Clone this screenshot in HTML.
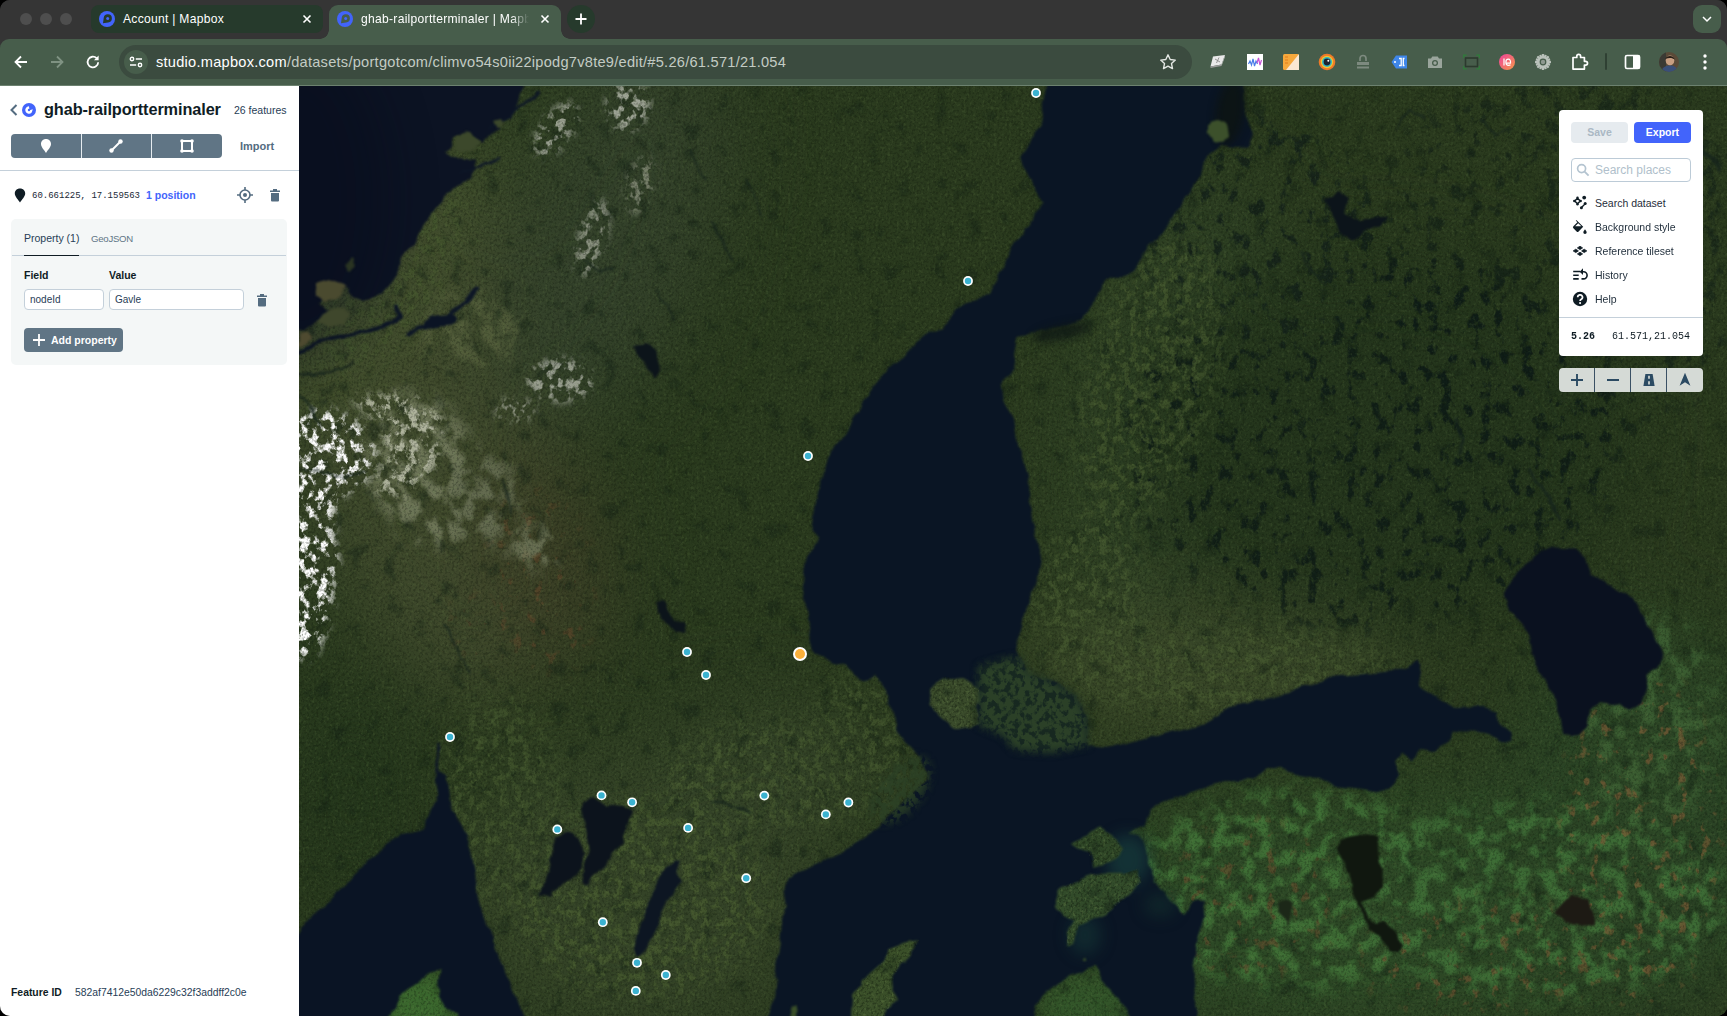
<!DOCTYPE html>
<html>
<head>
<meta charset="utf-8">
<title>ghab-railportterminaler | Mapbox</title>
<style>
*{box-sizing:border-box;margin:0;padding:0}
html,body{width:1727px;height:1016px;overflow:hidden;background:#000;font-family:"Liberation Sans",sans-serif;}
#win{position:absolute;left:0;top:0;width:1727px;height:1016px;overflow:hidden;background:#353535;border-radius:10px;}
.abs{position:absolute}
/* ---------- tab strip ---------- */
#tabstrip{position:absolute;left:0;top:0;width:1727px;height:39px;background:#353535;}
.tl{position:absolute;top:13px;width:12px;height:12px;border-radius:50%;background:#4e4e4e}
#tab1{position:absolute;left:91px;top:5px;width:232px;height:28px;border-radius:8px;background:#263a2c}
#tab2{position:absolute;left:329px;top:5px;width:232px;height:34px;border-radius:9px 9px 0 0;background:#475d4b}
#tab2:before,#tab2:after{content:"";position:absolute;bottom:0;width:9px;height:9px;background:radial-gradient(circle at 0 0,rgba(0,0,0,0) 8.5px,#475d4b 9px)}
#tab2:before{left:-9px}
#tab2:after{right:-9px;background:radial-gradient(circle at 100% 0,rgba(0,0,0,0) 8.5px,#475d4b 9px)}
.tabtxt{position:absolute;top:7px;font-size:12.1px;color:#fff;white-space:nowrap;letter-spacing:0.28px}
.tabx{position:absolute;top:8px;width:12px;height:12px}
#newtab{position:absolute;left:567px;top:5px;width:28px;height:28px;border-radius:50%;background:#263a2c}
#tabsearch{position:absolute;left:1693px;top:5px;width:28px;height:28px;border-radius:9px;background:#475d4b}
/* ---------- toolbar ---------- */
#toolbar{position:absolute;left:0;top:39px;width:1727px;height:47px;background:#475d4b;border-bottom:1px solid #6c816f;border-radius:9px 9px 0 0}
#omni{position:absolute;left:119px;top:6px;width:1073px;height:34px;border-radius:17px;background:#3b4b3f}
#site{position:absolute;left:5px;top:5px;width:24px;height:24px;border-radius:50%;background:#475d4b}
#url{position:absolute;left:37px;top:9px;font-size:14.6px;color:#c3cbc4;white-space:nowrap;letter-spacing:0.255px}
#url b{font-weight:normal;color:#fff}
/* ---------- left panel ---------- */
#panel{position:absolute;left:0;top:86px;width:299px;height:930px;background:#fff;color:#273d56}
#title{position:absolute;left:44px;top:14px;font-size:16.3px;font-weight:bold;color:#0f1c24;white-space:nowrap;letter-spacing:-0.1px}
#feat{position:absolute;left:234px;top:18px;font-size:10.5px;color:#273d56;white-space:nowrap}
#tools{position:absolute;left:11px;top:48px;width:211px;height:24px;border-radius:4px;background:#607585;}
#tools i{position:absolute;top:0;width:1px;height:24px;background:#e6ecf0}
#import{position:absolute;left:240px;top:54px;font-size:11px;font-weight:bold;color:#546c80}
#hr1{position:absolute;left:0;top:84px;width:299px;height:1px;background:#c4d0da}
#coords{position:absolute;left:32px;top:105px;font-family:"Liberation Mono",monospace;font-size:9px;color:#1a2836;white-space:nowrap}
#pos{position:absolute;left:146px;top:103px;font-size:10.5px;font-weight:bold;color:#4264fb;white-space:nowrap}
#card{position:absolute;left:11px;top:133px;width:276px;height:146px;border-radius:5px;background:#f4f7f7}
#card .tab{position:absolute;top:13px;font-size:10.5px;white-space:nowrap}
#card .line{position:absolute;left:1px;top:36px;width:274px;height:1px;background:#c4d0da}
#card .act{position:absolute;left:13px;top:36px;width:55px;height:1px;background:#0f1c24}
#card .lbl{position:absolute;top:50px;font-size:10.5px;font-weight:bold;color:#0f1c24}
#card .inp{position:absolute;top:70px;height:21px;border:1px solid #c4d0da;border-radius:4px;background:#fff;font-size:10px;color:#273d56;padding:4px 0 0 5px}
#addp{position:absolute;left:13px;top:109px;width:99px;height:24px;border-radius:4px;background:#607585;color:#fff;font-size:10.5px;font-weight:bold}
#addp span{position:absolute;left:27px;top:6px;white-space:nowrap}
#fid{position:absolute;left:11px;top:901px;font-size:10.4px;font-weight:bold;color:#0f1c24;white-space:nowrap}
#fidv{position:absolute;left:75px;top:901px;font-size:10.37px;color:#273d56;white-space:nowrap}
/* ---------- map ---------- */
#map{position:absolute;left:299px;top:86px;width:1428px;height:930px;overflow:hidden;background:#2a3b1e}
/* ---------- right control ---------- */
#ctl{position:absolute;left:1559px;top:110px;width:144px;height:246px;border-radius:4px;background:#fff;color:#273d56}
#ctl .btn{position:absolute;top:12px;width:57px;height:21px;border-radius:4px;font-size:10.5px;font-weight:bold;text-align:center;line-height:21px}
#ctl .item{position:absolute;left:36px;font-size:10.5px;color:#1f2d3a;white-space:nowrap}
#zoomctl{position:absolute;left:1559px;top:368px;width:144px;height:24px;border-radius:4px;background:#d5dad6;overflow:hidden}
#zoomctl i{position:absolute;top:0;width:1px;height:24px;background:#3a5064}
</style>
</head>
<body>
<div id="win">
<!-- TABSTRIP -->
<div id="tabstrip">
  <div class="tl" style="left:20px"></div><div class="tl" style="left:40px"></div><div class="tl" style="left:60px"></div>
  <div id="tab1">
    <svg class="abs" style="left:8px;top:6px" width="16" height="16" viewBox="0 0 16 16"><circle cx="8" cy="8" r="8" fill="#4264fb"/><path d="M4 12.300l.7-5.300a4.100 4.100 0 1 1 4.400 4.500z" fill="#263a2c"/><circle cx="8.700" cy="7.400" r="1.500" fill="#4264fb"/></svg>
    <div class="tabtxt" style="left:32px">Account | Mapbox</div>
    <svg class="tabx" style="left:210px" viewBox="0 0 12 12"><path d="M2.5 2.5l7 7M9.5 2.5l-7 7" stroke="#fff" stroke-width="1.6"/></svg>
  </div>
  <div id="tab2">
    <svg class="abs" style="left:8px;top:6px" width="16" height="16" viewBox="0 0 16 16"><circle cx="8" cy="8" r="8" fill="#4264fb"/><path d="M4 12.300l.7-5.300a4.100 4.100 0 1 1 4.400 4.500z" fill="#475d4b"/><circle cx="8.700" cy="7.400" r="1.500" fill="#4264fb"/></svg>
    <div class="tabtxt" style="left:32px;width:168px;overflow:hidden;-webkit-mask-image:linear-gradient(90deg,#000 150px,transparent 168px)">ghab-railportterminaler | Mapbox</div>
    <svg class="tabx" style="left:210px" viewBox="0 0 12 12"><path d="M2.5 2.5l7 7M9.5 2.5l-7 7" stroke="#fff" stroke-width="1.6"/></svg>
  </div>
  <div id="newtab"><svg class="abs" style="left:7px;top:7px" width="14" height="14" viewBox="0 0 14 14"><path d="M7 1.5v11M1.5 7h11" stroke="#fff" stroke-width="1.8"/></svg></div>
  <div id="tabsearch"><svg class="abs" style="left:8px;top:9px" width="12" height="10" viewBox="0 0 12 10"><path d="M2 3l4 4 4-4" fill="none" stroke="#fff" stroke-width="1.5"/></svg></div>
</div>
<!-- TOOLBAR -->
<div id="toolbar">
  <svg class="abs" style="left:13px;top:15px" width="16" height="16" viewBox="0 0 16 16"><path d="M14 8H3M8 2.5L2.5 8 8 13.5" fill="none" stroke="#fff" stroke-width="1.8"/></svg>
  <svg class="abs" style="left:49px;top:15px" width="16" height="16" viewBox="0 0 16 16"><path d="M2 8h11M8 2.5L13.5 8 8 13.5" fill="none" stroke="#7f9282" stroke-width="1.8"/></svg>
  <svg class="abs" style="left:85px;top:15px" width="16" height="16" viewBox="0 0 16 16"><path d="M13.2 8.2A5.3 5.3 0 1 1 11.6 4.2" fill="none" stroke="#fff" stroke-width="1.8"/><path d="M13.6 1.6v4.6H9z" fill="#fff"/></svg>
  <div id="omni">
    <div id="site"><svg class="abs" style="left:5px;top:6px" width="14" height="12" viewBox="0 0 14 12"><path d="M6.800 3H13M1 9h6.200" stroke="#fff" stroke-width="1.600"/><circle cx="3" cy="3" r="1.700" fill="none" stroke="#fff" stroke-width="1.400"/><circle cx="11" cy="9" r="1.700" fill="none" stroke="#fff" stroke-width="1.400"/></svg></div>
    <div id="url"><b>studio.mapbox.com</b>/datasets/portgotcom/climvo54s0ii22ipodg7v8te9/edit/#5.26/61.571/21.054</div>
    <svg class="abs" style="left:1040px;top:8px" width="18" height="18" viewBox="0 0 18 18"><path d="M9 1.8l2.2 4.7 5.1.6-3.8 3.5 1 5L9 13.1l-4.500 2.500 1-5-3.800-3.500 5.100-.6z" fill="none" stroke="#e4e8e4" stroke-width="1.4" stroke-linejoin="round"/></svg>
  </div>
  <div id="exts">
  <!-- ext1: white 3d tile -->
  <svg class="abs" style="left:1209px;top:14px" width="18" height="18" viewBox="0 0 18 18"><path d="M4 3.500l12-1.500-3.500 9.500-11 2z" fill="#e9e9e9"/><path d="M1.500 13.500l11-2v1.600l-11 2z" fill="#9a9a9a"/><path d="M12.500 11.500L16 2v1.800l-3.500 9.300z" fill="#c4c4c4"/><path d="M6 6l5 3M10 4.500L7.500 10" stroke="#8a8a8a" stroke-width=".9"/></svg>
  <!-- ext2: white square w/ waveform -->
  <svg class="abs" style="left:1247px;top:15px" width="16" height="16" viewBox="0 0 16 16"><rect width="16" height="16" fill="#fff"/><path d="M1.500 10l1.500-3 1.500 4 1.500-6 1.500 7 1.500-5 1.500 3" fill="none" stroke="#4a7de8" stroke-width="1.200"/><path d="M10 9l1.500-5 1.500 7 1.500-5" fill="none" stroke="#c653d6" stroke-width="1.200"/></svg>
  <!-- ext3: orange/white notebook -->
  <svg class="abs" style="left:1283px;top:15px" width="16" height="16" viewBox="0 0 16 16"><rect width="16" height="16" rx="1.500" fill="#f6a83c"/><path d="M16 0v16H3z" fill="#fbe7d2"/><path d="M2 3h3M2 6h3M2 9h3" stroke="#e27a1a" stroke-width="1"/></svg>
  <!-- ext4: colourful eye -->
  <svg class="abs" style="left:1318px;top:14px" width="18" height="18" viewBox="0 0 18 18"><circle cx="9" cy="9" r="8.300" fill="#f07a28"/><circle cx="9" cy="9" r="6.200" fill="#f2c530"/><circle cx="9" cy="9" r="5" fill="#31b6c4"/><circle cx="9" cy="9" r="3.400" fill="#1d2430"/><circle cx="10.300" cy="7.800" r="1" fill="#fff"/></svg>
  <!-- ext5: gray stamp -->
  <svg class="abs" style="left:1355px;top:15px" width="16" height="16" viewBox="0 0 16 16"><path d="M5 7V4.500a3 3 0 0 1 6 0V7" fill="none" stroke="#7d8a7f" stroke-width="1.700"/><rect x="2" y="8" width="12" height="3" fill="#7d8a7f"/><rect x="2" y="12.500" width="12" height="2" fill="#7d8a7f"/></svg>
  <!-- ext6: blue tag -->
  <svg class="abs" style="left:1391px;top:16px" width="17" height="14" viewBox="0 0 17 14"><path d="M5 .5h11v13H5L.5 7z" fill="#3f86e8"/><circle cx="4" cy="7" r="1" fill="#fff"/><path d="M8 3.500h2.200v7H8M13.500 3.500h-1.200v7h1.200" fill="none" stroke="#fff" stroke-width="1.300"/></svg>
  <!-- ext7: gray camera -->
  <svg class="abs" style="left:1427px;top:16px" width="16" height="14" viewBox="0 0 16 14"><path d="M1 3.500h3l1.300-2h5.400l1.300 2h3V13H1z" fill="#9aa59c"/><circle cx="8" cy="8" r="3" fill="#475d4b"/><circle cx="8" cy="8" r="1.700" fill="#9aa59c"/></svg>
  <!-- ext8: dark rect w/ green corners -->
  <svg class="abs" style="left:1463px;top:15px" width="17" height="16" viewBox="0 0 17 16"><rect x="2.500" y="4" width="12" height="8.500" fill="none" stroke="#2c3a2e" stroke-width="1.600"/><path d="M.7 4V1.200h3M13.300 1.200h3V4M.7 12v2.800h3M13.300 14.800h3V12" fill="none" stroke="#2f7d3a" stroke-width="1.200"/></svg>
  <!-- ext9: pink-orange circle -->
  <svg class="abs" style="left:1499px;top:15px" width="16" height="16" viewBox="0 0 16 16"><defs><linearGradient id="gp" x1="0" y1="0" x2="1" y2="1"><stop offset="0" stop-color="#f0409a"/><stop offset="1" stop-color="#f59a4a"/></linearGradient></defs><circle cx="8" cy="8" r="8" fill="url(#gp)"/><path d="M5 4.500v7M7.500 9.200h4c.3-2.500-.6-4-2.200-4-1.500 0-2.400 1.300-2.400 3 0 1.900 1 3.200 2.700 3.200.8 0 1.400-.2 1.900-.600" fill="none" stroke="#fff" stroke-width="1.200"/></svg>
  <!-- ext10: gear -->
  <svg class="abs" style="left:1535px;top:15px" width="16" height="16" viewBox="0 0 16 16"><g fill="#b9c1ba"><circle cx="8" cy="8" r="5.600"/><g><rect x="6.800" y="0" width="2.400" height="16" rx=".6"/><rect x="6.800" y="0" width="2.400" height="16" rx=".6" transform="rotate(45 8 8)"/><rect x="6.800" y="0" width="2.400" height="16" rx=".6" transform="rotate(90 8 8)"/><rect x="6.800" y="0" width="2.400" height="16" rx=".6" transform="rotate(135 8 8)"/><rect x="6.800" y=".400" width="2.400" height="15.200" rx=".6" transform="rotate(22.500 8 8)"/><rect x="6.800" y=".400" width="2.400" height="15.200" rx=".6" transform="rotate(67.500 8 8)"/><rect x="6.800" y=".400" width="2.400" height="15.200" rx=".6" transform="rotate(112.500 8 8)"/><rect x="6.800" y=".400" width="2.400" height="15.200" rx=".6" transform="rotate(157.500 8 8)"/></g></g><circle cx="8" cy="8" r="3.400" fill="#475d4b"/><circle cx="8" cy="8" r="2.200" fill="#8d988f"/></svg>
  <!-- puzzle -->
  <svg class="abs" style="left:1570px;top:13px" width="19" height="19" viewBox="0 0 19 19"><path d="M3 5.500h3.800V4.300a1.900 1.900 0 0 1 3.800 0v1.200h3.800v3.800h1.200a1.900 1.900 0 0 1 0 3.800h-1.200v4H3z" fill="none" stroke="#fff" stroke-width="1.700" stroke-linejoin="round"/></svg>
  <div class="abs" style="left:1605px;top:14px;width:2px;height:17px;background:#2f4033;border-radius:1px"></div>
  <!-- side panel -->
  <svg class="abs" style="left:1624px;top:15px" width="17" height="16" viewBox="0 0 17 16"><rect x="1.500" y="1.500" width="14" height="13" rx="1.500" fill="none" stroke="#fff" stroke-width="1.700"/><rect x="9" y="1.500" width="6.500" height="13" fill="#fff"/></svg>
  <!-- avatar -->
  <svg class="abs" style="left:1659px;top:13px" width="20" height="20" viewBox="0 0 20 20"><defs><clipPath id="av"><circle cx="10" cy="10" r="10"/></clipPath></defs><g clip-path="url(#av)"><rect width="20" height="20" fill="#5a4a38"/><rect x="0" y="0" width="7" height="20" fill="#3b3a34"/><ellipse cx="11" cy="8.500" rx="4.300" ry="5" fill="#c99f82"/><path d="M6.500 7c0-4 9-4.500 9 .5-1.500-1.800-6-2.200-9-.5z" fill="#2a2019"/><path d="M2 20c1-5 5-6.500 9-6.500s7 1.500 8 6.500z" fill="#3a4f78"/></g></svg>
  <!-- 3 dots -->
  <svg class="abs" style="left:1703px;top:14px" width="4" height="18" viewBox="0 0 4 18"><circle cx="2" cy="3" r="1.700" fill="#fff"/><circle cx="2" cy="9" r="1.700" fill="#fff"/><circle cx="2" cy="15" r="1.700" fill="#fff"/></svg>
</div>
</div>
<!-- LEFT PANEL -->
<div id="panel">
  <svg class="abs" style="left:10px;top:18px" width="8" height="12" viewBox="0 0 8 12"><path d="M6.5 1L1.500 6l5 5" fill="none" stroke="#546c80" stroke-width="2"/></svg>
  <svg class="abs" style="left:22px;top:17px" width="14" height="14" viewBox="0 0 14 14"><circle cx="7" cy="7" r="7" fill="#4264fb"/><path d="M7 3.300a3.700 3.700 0 1 0 2.700 6.200l1.100-3.300-3.300 1.100z" fill="#fff"/><circle cx="7" cy="7" r="1.200" fill="#4264fb"/></svg>
  <div id="title">ghab-railportterminaler</div>
  <div id="feat">26 features</div>
  <div id="tools"><i style="left:70px"></i><i style="left:140px"></i>
    <svg class="abs" style="left:28px;top:4px" width="14" height="16" viewBox="0 0 14 16"><path d="M7 1C4 1 2 3.200 2 6c0 3.200 3.400 6.200 5 9 1.600-2.800 5-5.800 5-9 0-2.800-2-5-5-5z" fill="#fff"/></svg>
    <svg class="abs" style="left:97px;top:4px" width="16" height="16" viewBox="0 0 16 16"><path d="M3.500 12.500l9-9" stroke="#fff" stroke-width="2"/><circle cx="3.500" cy="12.500" r="2.200" fill="#fff"/><circle cx="12.500" cy="3.500" r="2.200" fill="#fff"/></svg>
    <svg class="abs" style="left:168px;top:4px" width="16" height="16" viewBox="0 0 16 16"><rect x="3" y="3" width="10" height="10" fill="none" stroke="#fff" stroke-width="2"/><circle cx="3" cy="3" r="1.800" fill="#fff"/><circle cx="13" cy="3" r="1.800" fill="#fff"/><circle cx="3" cy="13" r="1.800" fill="#fff"/><circle cx="13" cy="13" r="1.800" fill="#fff"/></svg>
  </div>
  <div id="import">Import</div>
  <div id="hr1"></div>
  <svg class="abs" style="left:14px;top:102px" width="12" height="15" viewBox="0 0 12 15"><path d="M6 .5C2.800.5.800 2.700.800 5.500c0 3 3.600 6.400 5.200 9 1.600-2.600 5.200-6 5.200-9C11.200 2.700 9.200.5 6 .5z" fill="#0f1c24"/></svg>
  <div id="coords">60.661225, 17.159563</div>
  <div id="pos">1 position</div>
  <svg class="abs" style="left:237px;top:101px" width="16" height="16" viewBox="0 0 16 16"><circle cx="8" cy="8" r="5" fill="none" stroke="#546c80" stroke-width="1.600"/><circle cx="8" cy="8" r="2" fill="#546c80"/><path d="M8 0v3M8 13v3M0 8h3M13 8h3" stroke="#546c80" stroke-width="1.600"/></svg>
  <svg class="abs" style="left:269px;top:102px" width="12" height="14" viewBox="0 0 12 14"><path d="M1 2.500h10v1.500H1zM4 1h4v1.500H4zM2 5h8v7.500a1 1 0 0 1-1 1H3a1 1 0 0 1-1-1z" fill="#546c80"/></svg>
  <div id="card">
    <div class="tab" style="left:13px;color:#273d56">Property (1)</div>
    <div class="tab" style="left:80px;color:#607585;font-size:9.6px;letter-spacing:-0.25px;top:14px">GeoJSON</div>
    <div class="line"></div><div class="act"></div>
    <div class="lbl" style="left:13px">Field</div>
    <div class="lbl" style="left:98px">Value</div>
    <div class="inp" style="left:13px;width:80px">nodeId</div>
    <div class="inp" style="left:98px;width:135px">Gavle</div>
    <svg class="abs" style="left:245px;top:74px" width="12" height="14" viewBox="0 0 12 14"><path d="M1 2.500h10v1.500H1zM4 1h4v1.500H4zM2 5h8v7.500a1 1 0 0 1-1 1H3a1 1 0 0 1-1-1z" fill="#546c80"/></svg>
    <div id="addp"><svg class="abs" style="left:9px;top:6px" width="12" height="12" viewBox="0 0 12 12"><path d="M6 0v12M0 6h12" stroke="#fff" stroke-width="1.800"/></svg><span>Add property</span></div>
  </div>
  <div id="fid">Feature ID</div>
  <div id="fidv">582af7412e50da6229c32f3addff2c0e</div>
</div>
<!-- MAP -->
<div id="map">
<!--MAPSVG-->
<svg width="1428" height="930" viewBox="299 86 1428 930" style="display:block">
<defs>
<filter id="b1" filterUnits="userSpaceOnUse" x="299" y="86" width="1428" height="930" color-interpolation-filters="sRGB"><feGaussianBlur stdDeviation="0.9"/></filter>
<filter id="b2" filterUnits="userSpaceOnUse" x="299" y="86" width="1428" height="930" color-interpolation-filters="sRGB"><feGaussianBlur stdDeviation="2"/></filter>
<filter id="b4" filterUnits="userSpaceOnUse" x="299" y="86" width="1428" height="930" color-interpolation-filters="sRGB"><feGaussianBlur stdDeviation="4"/></filter>
<filter id="b8" filterUnits="userSpaceOnUse" x="299" y="86" width="1428" height="930" color-interpolation-filters="sRGB"><feGaussianBlur stdDeviation="8"/></filter>
<filter id="b14" filterUnits="userSpaceOnUse" x="299" y="86" width="1428" height="930" color-interpolation-filters="sRGB"><feGaussianBlur stdDeviation="14"/></filter>
<filter id="b25" filterUnits="userSpaceOnUse" x="299" y="86" width="1428" height="930" color-interpolation-filters="sRGB"><feGaussianBlur stdDeviation="25"/></filter>
<filter id="b40" filterUnits="userSpaceOnUse" x="299" y="86" width="1428" height="930" color-interpolation-filters="sRGB"><feGaussianBlur stdDeviation="40"/></filter>
<filter id="snow" filterUnits="userSpaceOnUse" x="299" y="86" width="1428" height="930" color-interpolation-filters="sRGB"><feGaussianBlur in="SourceGraphic" stdDeviation="5" result="b"/><feTurbulence type="fractalNoise" baseFrequency="0.11 0.095" numOctaves="4" seed="21" result="n"/><feColorMatrix in="n" type="matrix" values="0 0 0 0 1  0 0 0 0 1  0 0 0 0 1  7 0 0 0 -3.5"/><feGaussianBlur stdDeviation="0.5" result="m"/><feComposite in="b" in2="m" operator="in"/></filter>
<filter id="snow2" filterUnits="userSpaceOnUse" x="299" y="86" width="1428" height="930" color-interpolation-filters="sRGB"><feGaussianBlur in="SourceGraphic" stdDeviation="4" result="b"/><feTurbulence type="fractalNoise" baseFrequency="0.12 0.1" numOctaves="3" seed="4" result="n"/><feColorMatrix in="n" type="matrix" values="0 0 0 0 1  0 0 0 0 1  0 0 0 0 1  0 7 0 0 -3.5"/><feGaussianBlur stdDeviation="0.7" result="m"/><feComposite in="b" in2="m" operator="in"/></filter>
<filter id="tan" filterUnits="userSpaceOnUse" x="299" y="86" width="1428" height="930" color-interpolation-filters="sRGB"><feGaussianBlur in="SourceGraphic" stdDeviation="8" result="b"/><feTurbulence type="fractalNoise" baseFrequency="0.06 0.05" numOctaves="3" seed="51" result="n"/><feColorMatrix in="n" type="matrix" values="0 0 0 0 1  0 0 0 0 1  0 0 0 0 1  0 0 6 0 -2.7"/><feGaussianBlur stdDeviation="1" result="m"/><feComposite in="b" in2="m" operator="in"/></filter>
<filter id="farm" filterUnits="userSpaceOnUse" x="299" y="86" width="1428" height="930" color-interpolation-filters="sRGB"><feGaussianBlur in="SourceGraphic" stdDeviation="12" result="b"/><feTurbulence type="fractalNoise" baseFrequency="0.13 0.11" numOctaves="3" seed="9" result="n"/><feColorMatrix in="n" type="matrix" values="0 0 0 0 1  0 0 0 0 1  0 0 0 0 1  0 6 0 0 -2.9"/><feGaussianBlur stdDeviation="0.7" result="m"/><feComposite in="b" in2="m" operator="in"/></filter>
<filter id="farm2" filterUnits="userSpaceOnUse" x="299" y="86" width="1428" height="930" color-interpolation-filters="sRGB"><feGaussianBlur in="SourceGraphic" stdDeviation="10" result="b"/><feTurbulence type="fractalNoise" baseFrequency="0.07 0.06" numOctaves="3" seed="14" result="n"/><feColorMatrix in="n" type="matrix" values="0 0 0 0 1  0 0 0 0 1  0 0 0 0 1  0 0 6 0 -2.8"/><feGaussianBlur stdDeviation="1" result="m"/><feComposite in="b" in2="m" operator="in"/></filter>
<filter id="lakes" filterUnits="userSpaceOnUse" x="299" y="86" width="1428" height="930" color-interpolation-filters="sRGB"><feGaussianBlur in="SourceGraphic" stdDeviation="12" result="b"/><feTurbulence type="fractalNoise" baseFrequency="0.075 0.06" numOctaves="4" seed="33" result="n"/><feColorMatrix in="n" type="matrix" values="0 0 0 0 1  0 0 0 0 1  0 0 0 0 1  -7 0 0 0 3.05"/><feGaussianBlur stdDeviation="0.7" result="m"/><feComposite in="b" in2="m" operator="in"/></filter>
<filter id="lakes2" filterUnits="userSpaceOnUse" x="299" y="86" width="1428" height="930" color-interpolation-filters="sRGB"><feGaussianBlur in="SourceGraphic" stdDeviation="14" result="b"/><feTurbulence type="fractalNoise" baseFrequency="0.06 0.05" numOctaves="4" seed="17" result="n"/><feColorMatrix in="n" type="matrix" values="0 0 0 0 1  0 0 0 0 1  0 0 0 0 1  0 -7 0 0 2.7"/><feGaussianBlur stdDeviation="1" result="m"/><feComposite in="b" in2="m" operator="in"/></filter>
<filter id="brown" filterUnits="userSpaceOnUse" x="299" y="86" width="1428" height="930" color-interpolation-filters="sRGB"><feGaussianBlur in="SourceGraphic" stdDeviation="10" result="b"/><feTurbulence type="fractalNoise" baseFrequency="0.09 0.08" numOctaves="3" seed="41" result="n"/><feColorMatrix in="n" type="matrix" values="0 0 0 0 1  0 0 0 0 1  0 0 0 0 1  0 0 -8 0 3"/><feGaussianBlur stdDeviation="0.7" result="m"/><feComposite in="b" in2="m" operator="in"/></filter>
<filter id="arch" filterUnits="userSpaceOnUse" x="299" y="86" width="1428" height="930" color-interpolation-filters="sRGB"><feGaussianBlur in="SourceGraphic" stdDeviation="4" result="b"/><feTurbulence type="fractalNoise" baseFrequency="0.16 0.14" numOctaves="3" seed="77" result="n"/><feColorMatrix in="n" type="matrix" values="0 0 0 0 1  0 0 0 0 1  0 0 0 0 1  -6 0 0 0 3.75"/><feGaussianBlur stdDeviation="0.5" result="m"/><feComposite in="b" in2="m" operator="in"/></filter>
<filter id="coast" filterUnits="userSpaceOnUse" x="259" y="46" width="1508" height="1010" color-interpolation-filters="sRGB"><feTurbulence type="fractalNoise" baseFrequency="0.045" numOctaves="3" seed="8" result="n"/><feDisplacementMap in="SourceGraphic" in2="n" scale="9" xChannelSelector="R" yChannelSelector="G"/><feGaussianBlur stdDeviation="0.8"/></filter>
<clipPath id="cl"><rect x="299" y="86" width="1428" height="930"/></clipPath>
</defs>
<g clip-path="url(#cl)">
<rect x="299" y="86" width="1428" height="930" fill="#2a3a1e"/>
<g filter="url(#b40)">
<ellipse cx="410" cy="380" rx="140" ry="330" fill="#3f492c" transform="rotate(-15 410 380)" />
<ellipse cx="610" cy="230" rx="100" ry="200" fill="#33412a" transform="rotate(20 610 230)" />
<path d="M540.0 86.0 L500.0 150.0 L470.0 215.0 L430.0 275.0 L380.0 330.0 L340.0 380.0 L299.0 420.0 L299.0 330.0 L330.0 320.0 L390.0 285.0 L404.0 255.0 L435.0 211.0 L457.0 186.0 L474.0 169.0 L482.0 140.0 L518.0 107.0 L525.0 86.0Z" fill="#46562f" />
<ellipse cx="545" cy="560" rx="60" ry="110" fill="#3c3f26" transform="rotate(-10 545 560)" />
<ellipse cx="640" cy="890" rx="190" ry="150" fill="#344327" />
<ellipse cx="770" cy="770" rx="120" ry="70" fill="#334227" />
<ellipse cx="1170" cy="400" rx="110" ry="230" fill="#2e4024" transform="rotate(12 1170 400)" />
<ellipse cx="1210" cy="665" rx="200" ry="65" fill="#3a4829" />
<ellipse cx="1380" cy="440" rx="250" ry="190" fill="#24351c" />
<ellipse cx="1400" cy="910" rx="380" ry="130" fill="#2d4826" />
<ellipse cx="1650" cy="820" rx="150" ry="200" fill="#2b4425" />
<ellipse cx="350" cy="800" rx="70" ry="120" fill="#25371c" />
</g>
<g filter="url(#b14)">
<ellipse cx="420" cy="1008" rx="45" ry="40" fill="#3b682e" />
<ellipse cx="1085" cy="1008" rx="50" ry="35" fill="#33562a" />
</g>
<g filter="url(#lakes)" opacity="0.85">
<ellipse cx="1370" cy="440" rx="250" ry="190" fill="#0f1c17" />
<ellipse cx="1260" cy="230" rx="120" ry="120" fill="#14221a" />
</g>
<g filter="url(#lakes)" opacity="0.5">
<ellipse cx="1560" cy="260" rx="200" ry="190" fill="#0f1c17" />
</g>
<g filter="url(#lakes2)" opacity="0.42">
<rect x="299" y="86" width="1428" height="930" fill="#142216"/>
</g>
<g filter="url(#farm)" opacity="0.68">
<ellipse cx="1150" cy="380" rx="65" ry="150" fill="#46592f" transform="rotate(15 1150 380)" />
<ellipse cx="1090" cy="600" rx="55" ry="90" fill="#475a31" />
<ellipse cx="1230" cy="670" rx="170" ry="45" fill="#475a31" />
<ellipse cx="640" cy="900" rx="130" ry="100" fill="#4a5e31" />
<ellipse cx="500" cy="800" rx="60" ry="110" fill="#44572f" />
<ellipse cx="780" cy="775" rx="120" ry="55" fill="#485b31" />
<ellipse cx="860" cy="740" rx="50" ry="70" fill="#44572f" />
<ellipse cx="380" cy="250" rx="70" ry="130" fill="#46582f" transform="rotate(25 380 250)" />
</g>
<g filter="url(#farm2)" opacity="0.8">
<ellipse cx="1300" cy="890" rx="170" ry="100" fill="#44783a" />
<ellipse cx="1540" cy="900" rx="190" ry="100" fill="#42753a" />
<ellipse cx="1650" cy="720" rx="70" ry="110" fill="#3f6335" />
</g>
<g filter="url(#brown)" opacity="0.7">
<ellipse cx="1640" cy="840" rx="80" ry="170" fill="#7a5a35" />
<ellipse cx="1480" cy="960" rx="120" ry="60" fill="#6a5030" />
<ellipse cx="1250" cy="900" rx="90" ry="80" fill="#5e4a2c" />
<ellipse cx="540" cy="580" rx="50" ry="90" fill="#5c452a" transform="rotate(-10 540 580)" />
<ellipse cx="480" cy="625" rx="30" ry="30" fill="#54422a" />
</g>
<g filter="url(#tan)" opacity="0.75">
<ellipse cx="425" cy="470" rx="55" ry="80" fill="#7d8466" transform="rotate(-20 425 470)" />
<ellipse cx="485" cy="500" rx="36" ry="45" fill="#70775c" />
<ellipse cx="535" cy="548" rx="28" ry="24" fill="#767d60" />
<ellipse cx="470" cy="330" rx="50" ry="40" fill="#59633f" />
</g>
<g filter="url(#snow)">
<path d="M290.0 415.0 L325.0 408.0 L352.0 418.0 L372.0 438.0 L376.0 462.0 L362.0 484.0 L340.0 496.0 L332.0 520.0 L338.0 560.0 L332.0 600.0 L324.0 636.0 L314.0 656.0 L290.0 660.0Z" fill="#ffffff" />
<path d="M350.0 398.0 L410.0 392.0 L445.0 420.0 L436.0 468.0 L400.0 498.0 L372.0 490.0 L388.0 455.0 L380.0 425.0Z" fill="#aeb29c" />
</g>
<g filter="url(#snow2)" opacity="0.6">
<ellipse cx="556" cy="130" rx="16" ry="32" fill="#e0e0d8" transform="rotate(35 556 130)" />
<ellipse cx="628" cy="106" rx="22" ry="26" fill="#e6e6de" transform="rotate(20 628 106)" />
<ellipse cx="592" cy="238" rx="14" ry="40" fill="#c5c6ba" transform="rotate(15 592 238)" />
<ellipse cx="560" cy="380" rx="34" ry="22" fill="#dcdcd4" />
<ellipse cx="515" cy="410" rx="20" ry="12" fill="#c0c2b6" />
<ellipse cx="640" cy="185" rx="14" ry="30" fill="#a5a896" transform="rotate(15 640 185)" />
</g>
<filter id="gr" filterUnits="userSpaceOnUse" x="299" y="86" width="1428" height="930" color-interpolation-filters="sRGB"><feTurbulence type="fractalNoise" baseFrequency="0.42 0.38" numOctaves="2" seed="2"/><feColorMatrix type="matrix" values="0 0 0 0 0.05  0 0 0 0 0.08  0 0 0 0 0.04  4 0 0 0 -1.85"/></filter>
<filter id="gr2" filterUnits="userSpaceOnUse" x="299" y="86" width="1428" height="930" color-interpolation-filters="sRGB"><feTurbulence type="fractalNoise" baseFrequency="0.33 0.3" numOctaves="2" seed="6"/><feColorMatrix type="matrix" values="0 0 0 0 0.45  0 0 0 0 0.55  0 0 0 0 0.32  0 4 0 0 -2.15"/></filter>
<rect x="299" y="86" width="1428" height="930" filter="url(#gr)" opacity="0.26"/>
<rect x="299" y="86" width="1428" height="930" filter="url(#gr2)" opacity="0.15"/>
<g filter="url(#coast)">
<path d="M269.0 56.0 L531.0 56.0 L525.0 86.0 L520.0 98.5 L518.0 106.8 L509.5 117.3 L495.0 123.5 L499.0 129.8 L482.4 140.2 L470.0 133.0 L453.3 137.0 L445.0 152.7 L461.6 158.0 L476.2 160.0 L474.0 169.4 L470.0 177.7 L457.4 186.0 L445.0 196.5 L434.5 211.0 L424.0 225.7 L415.7 240.3 L403.2 254.9 L401.0 263.2 L390.7 279.9 L384.0 293.0 L361.5 301.0 L351.0 296.8 L347.0 288.5 L330.0 290.6 L317.8 301.0 L330.0 311.4 L315.7 324.0 L299.0 328.0 L269.0 330.0Z" fill="#0c1323" />
<path d="M1047.5 86.0 L1048.0 56.0 L1243.0 56.0 L1243.2 86.0 L1243.2 100.6 L1245.6 117.6 L1252.9 134.6 L1248.0 146.8 L1233.5 146.8 L1218.9 144.4 L1206.7 156.5 L1204.3 171.1 L1194.6 183.3 L1192.1 193.0 L1175.1 212.5 L1165.4 229.5 L1150.8 244.1 L1141.1 258.7 L1136.2 268.4 L1121.6 275.7 L1107.0 280.5 L1097.3 297.6 L1087.5 312.2 L1078.6 320.0 L1051.8 329.7 L1017.8 337.0 L1012.9 368.6 L1000.8 383.2 L1003.2 400.3 L1012.9 417.3 L1015.4 436.7 L1022.6 456.2 L1027.5 475.6 L1029.9 495.1 L1032.4 514.6 L1034.8 534.0 L1039.7 551.0 L1042.1 565.0 L1037.2 574.6 L1032.4 596.5 L1025.1 613.5 L1017.8 633.0 L1020.0 657.0 L1027.5 672.0 L1051.8 681.6 L1076.0 696.0 L1086.0 715.6 L1088.0 745.0 L1115.1 747.3 L1149.1 737.5 L1173.5 731.5 L1208.0 721.0 L1227.4 708.0 L1255.5 703.3 L1279.0 696.3 L1302.4 686.9 L1332.9 677.5 L1361.1 675.2 L1384.5 672.8 L1403.3 668.1 L1417.4 658.8 L1422.0 670.5 L1419.7 686.9 L1431.4 696.3 L1445.5 703.3 L1454.9 708.0 L1478.3 706.8 L1494.7 710.4 L1499.4 722.1 L1511.2 731.5 L1512.3 738.5 L1501.8 740.8 L1483.0 731.5 L1461.9 731.5 L1452.5 733.8 L1450.2 743.2 L1436.1 750.2 L1419.7 747.9 L1415.0 762.0 L1403.3 752.6 L1395.1 762.0 L1398.6 773.7 L1393.9 785.4 L1384.5 791.3 L1361.1 787.7 L1337.6 785.4 L1318.9 778.4 L1300.1 774.9 L1281.3 769.0 L1267.3 767.8 L1255.5 778.4 L1227.4 780.7 L1215.7 783.1 L1196.9 790.1 L1178.1 797.1 L1164.1 801.8 L1151.8 810.5 L1144.7 826.9 L1128.3 833.9 L1142.4 841.0 L1147.1 862.1 L1154.1 880.8 L1165.9 897.3 L1184.6 913.7 L1194.6 902.0 L1205.1 902.0 L1200.4 920.7 L1196.9 944.2 L1193.4 967.6 L1194.6 991.1 L1195.7 1016.0 L1196.0 1046.0 L1131.0 1046.0 L1130.7 1016.0 L1128.3 1009.8 L1116.6 995.8 L1102.5 979.3 L1097.8 965.3 L1062.7 979.3 L1043.9 991.1 L1034.5 1016.0 L1034.0 1046.0 L766.0 1046.0 L765.9 1016.0 L768.2 1009.9 L775.2 996.0 L776.4 979.7 L777.5 961.1 L779.9 942.6 L782.2 924.0 L786.8 905.4 L784.5 891.5 L789.1 879.9 L800.8 870.6 L819.3 861.3 L842.6 852.0 L861.1 840.4 L879.7 826.4 L893.7 810.2 L912.2 793.9 L926.2 780.0 L927.8 774.0 L920.5 754.6 L905.9 744.8 L896.2 730.2 L891.3 710.8 L886.5 691.3 L874.3 674.3 L862.1 681.6 L847.5 664.6 L833.0 662.1 L813.5 652.4 L808.6 633.0 L806.2 608.6 L803.8 584.3 L806.2 565.0 L808.6 553.5 L818.4 538.9 L812.3 526.7 L815.9 504.8 L820.8 480.5 L828.1 465.9 L833.0 448.9 L845.1 431.9 L852.4 417.3 L862.1 402.7 L874.3 388.1 L886.5 368.6 L905.9 356.5 L915.6 341.9 L930.2 332.2 L940.5 329.2 L955.1 309.7 L974.5 300.0 L989.1 292.7 L998.9 278.1 L1006.2 261.1 L1013.5 241.6 L1030.5 222.2 L1042.6 202.7 L1032.9 185.7 L1025.6 173.5 L1020.8 156.5 L1030.5 139.5 L1040.2 122.5 L1042.6 105.5Z" fill="#0a1524" />
<path d="M269.0 940.0 L299.0 933.7 L308.8 919.1 L328.3 902.0 L347.9 882.4 L367.4 862.9 L387.0 843.3 L401.6 836.0 L421.2 831.1 L431.0 814.0 L438.3 794.4 L435.9 777.3 L440.7 770.0 L445.6 777.3 L448.1 799.3 L455.4 818.9 L465.2 833.5 L470.1 850.6 L475.0 872.6 L477.4 897.1 L484.7 916.6 L492.1 936.2 L496.9 955.7 L504.3 972.8 L514.1 989.9 L518.9 1004.6 L523.8 1016.0 L524.0 1046.0 L458.0 1046.0 L457.8 1016.0 L445.6 1007.0 L439.5 999.7 L438.3 982.6 L440.7 968.0 L421.2 980.2 L401.6 994.8 L389.4 1016.0 L389.0 1046.0 L269.0 1046.0Z" fill="#0a1424" />
<path d="M1504.4 594.7 L1519.8 569.1 L1535.1 555.0 L1553.0 547.3 L1573.5 548.6 L1586.3 558.8 L1591.4 574.2 L1604.2 581.9 L1624.7 592.1 L1640.0 604.9 L1645.1 620.2 L1652.8 635.6 L1663.0 656.1 L1657.9 668.8 L1645.1 674.0 L1647.7 686.7 L1642.6 704.7 L1629.8 712.3 L1619.5 704.7 L1599.1 702.1 L1588.8 712.3 L1586.3 727.7 L1578.6 735.4 L1563.3 734.1 L1560.7 720.0 L1555.6 702.1 L1545.4 679.1 L1532.6 658.6 L1530.0 638.1 L1522.3 622.8 L1509.5 610.0Z" fill="#0a111f" />
<path d="M1336.4 850.4 L1342.3 838.6 L1361.1 834.4 L1377.5 836.3 L1378.7 855.0 L1382.2 873.8 L1384.5 885.5 L1375.1 897.3 L1362.0 902.0 L1366.9 920.7 L1372.8 925.4 L1384.5 921.9 L1393.9 930.1 L1402.1 944.2 L1398.6 953.5 L1389.2 951.2 L1379.8 937.1 L1370.0 930.0 L1362.0 918.0 L1358.0 902.0 L1356.4 899.6 L1351.7 890.2 L1350.5 873.8 L1344.7 862.1Z" fill="#10170f" />
<path d="M1280.2 902.0 L1286.0 897.3 L1291.9 902.0 L1290.7 916.0 L1288.4 930.1 L1284.9 918.4 L1280.2 911.3Z" fill="#1c2718" />
<path d="M1553.0 913.8 L1570.6 896.1 L1589.6 900.2 L1596.4 924.6 L1581.5 924.6 L1565.2 923.3Z" fill="#1d1a14" />
<path d="M555.6 836.0 L567.8 831.1 L580.0 840.9 L584.9 853.1 L582.5 867.8 L570.3 880.0 L558.0 887.3 L548.3 894.6 L538.5 897.1 L543.4 884.9 L550.7 872.6 L548.3 860.4 L553.2 845.8Z" fill="#0c131c" />
<path d="M582.5 801.8 L592.3 796.9 L604.5 806.7 L621.6 804.2 L631.4 811.5 L626.5 826.2 L624.0 843.3 L611.8 853.1 L606.9 865.3 L592.3 875.1 L587.4 884.9 L582.5 882.4 L584.9 865.3 L589.8 850.6 L587.4 833.5 L582.5 816.4Z" fill="#0c131c" />
<path d="M680.2 860.4 L675.3 872.6 L680.2 882.4 L668.0 897.1 L660.7 916.6 L650.9 936.2 L643.6 953.3 L638.7 958.2 L635.0 948.4 L638.7 931.3 L643.6 914.2 L650.9 897.1 L658.2 880.0 L665.6 867.8 L675.3 860.4Z" fill="#0d1622" />
<path d="M632.0 345.0 L645.0 343.0 L655.0 352.0 L662.0 368.0 L655.0 378.0 L648.0 365.0 L640.0 358.0Z" fill="#0c141a" />
<path d="M657.0 603.0 L664.0 601.0 L668.0 612.0 L676.0 620.0 L686.0 624.0 L684.0 634.0 L674.0 632.0 L664.0 622.0 L658.0 614.0Z" fill="#0c141a" />
<path d="M1326.0 200.0 L1340.0 193.0 L1350.0 200.0 L1346.0 212.0 L1360.0 222.0 L1389.0 214.0 L1380.0 226.0 L1362.0 232.0 L1352.0 242.0 L1340.0 232.0 L1334.0 218.0Z" fill="#0c141a" />
<path d="M299.0 353.0 L311.5 346.9 L330.3 338.5 L361.5 332.3 L382.4 326.0 L399.0 317.7 L397.0 307.3" fill="none" stroke="#0d1626" stroke-width="4" stroke-linecap="round" stroke-linejoin="round" />
<path d="M409.5 336.5 L415.7 328.0 L428.2 324.0 L445.0 317.7 L461.6 303.0 L476.2 288.5" fill="none" stroke="#0d1626" stroke-width="4" stroke-linecap="round" stroke-linejoin="round" />
<path d="M438.0 742.0 L437.0 760.0 L439.0 772.0" fill="none" stroke="#0d1626" stroke-width="3" stroke-linecap="round" stroke-linejoin="round" />
<path d="M488.0 128.0 L505.0 118.0 L525.0 104.0 L538.0 92.0" fill="none" stroke="#0d1626" stroke-width="2.5" stroke-linecap="round" stroke-linejoin="round" />
<path d="M462.0 172.0 L480.0 168.0 L498.0 160.0" fill="none" stroke="#0d1626" stroke-width="2.5" stroke-linecap="round" stroke-linejoin="round" />
<path d="M299.0 372.0 L315.0 376.0 L340.0 370.0 L352.0 362.0" fill="none" stroke="#15231b" stroke-width="2.4" stroke-linecap="round" stroke-linejoin="round" opacity="0.8"/>
<path d="M299.0 395.0 L312.0 408.0 L318.0 425.0" fill="none" stroke="#15231b" stroke-width="2.4" stroke-linecap="round" stroke-linejoin="round" opacity="0.8"/>
<path d="M299.0 470.0 L320.0 472.0 L345.0 478.0 L365.0 470.0" fill="none" stroke="#15231b" stroke-width="2" stroke-linecap="round" stroke-linejoin="round" opacity="0.8"/>
<path d="M712.0 222.0 L722.0 238.0 L733.0 260.0" fill="none" stroke="#15231b" stroke-width="2" stroke-linecap="round" stroke-linejoin="round" opacity="0.8"/>
<path d="M690.0 150.0 L700.0 165.0 L706.0 182.0" fill="none" stroke="#15231b" stroke-width="1.6" stroke-linecap="round" stroke-linejoin="round" opacity="0.8"/>
<path d="M745.0 180.0 L757.0 200.0 L762.0 216.0" fill="none" stroke="#15231b" stroke-width="1.6" stroke-linecap="round" stroke-linejoin="round" opacity="0.8"/>
<path d="M655.0 290.0 L668.0 305.0 L672.0 322.0" fill="none" stroke="#15231b" stroke-width="1.6" stroke-linecap="round" stroke-linejoin="round" opacity="0.8"/>
<path d="M585.0 262.0 L598.0 270.0 L612.0 268.0" fill="none" stroke="#15231b" stroke-width="2" stroke-linecap="round" stroke-linejoin="round" opacity="0.8"/>
<path d="M505.0 480.0 L508.0 500.0 L512.0 515.0" fill="none" stroke="#15231b" stroke-width="2" stroke-linecap="round" stroke-linejoin="round" opacity="0.8"/>
<path d="M445.0 625.0 L455.0 640.0 L462.0 660.0 L470.0 672.0" fill="none" stroke="#15231b" stroke-width="2" stroke-linecap="round" stroke-linejoin="round" opacity="0.8"/>
<path d="M712.0 802.0 L730.0 806.0 L751.0 810.0" fill="none" stroke="#15231b" stroke-width="2.4" stroke-linecap="round" stroke-linejoin="round" opacity="0.8"/>
<path d="M1300.0 250.0 L1310.0 270.0 L1325.0 285.0" fill="none" stroke="#15231b" stroke-width="2.4" stroke-linecap="round" stroke-linejoin="round" opacity="0.8"/>
<path d="M1395.0 130.0 L1410.0 110.0 L1425.0 118.0" fill="none" stroke="#15231b" stroke-width="2.4" stroke-linecap="round" stroke-linejoin="round" opacity="0.8"/>
<path d="M1480.0 120.0 L1495.0 135.0 L1510.0 128.0" fill="none" stroke="#15231b" stroke-width="2.4" stroke-linecap="round" stroke-linejoin="round" opacity="0.8"/>
<path d="M1530.0 470.0 L1545.0 490.0 L1560.0 520.0" fill="none" stroke="#15231b" stroke-width="3.2" stroke-linecap="round" stroke-linejoin="round" opacity="0.8"/>
<path d="M1690.0 130.0 L1705.0 150.0 L1720.0 170.0" fill="none" stroke="#15231b" stroke-width="4" stroke-linecap="round" stroke-linejoin="round" opacity="0.8"/>
<path d="M1455.0 420.0 L1462.0 440.0 L1460.0 455.0" fill="none" stroke="#15231b" stroke-width="3.2" stroke-linecap="round" stroke-linejoin="round" opacity="0.8"/>
<ellipse cx="438" cy="322" rx="17" ry="6" fill="#0b1424" transform="rotate(-12 438 322)" />
</g>
<g filter="url(#b25)" opacity="0.35"><ellipse cx="299" cy="200" rx="90" ry="160" fill="#060b1a" /></g>
<g filter="url(#b4)" opacity="0.8"><ellipse cx="1230" cy="112" rx="14" ry="34" fill="#0d1412" transform="rotate(8 1230 112)" /><ellipse cx="1062" cy="332" rx="30" ry="7" fill="#0d1614" transform="rotate(-12 1062 332)" /></g>
<g filter="url(#b8)" opacity="0.55">
<ellipse cx="1128" cy="860" rx="22" ry="26" fill="#1d4a44" />
<ellipse cx="1085" cy="935" rx="16" ry="20" fill="#173a38" />
<ellipse cx="1160" cy="905" rx="16" ry="12" fill="#15332f" />
</g>
<g filter="url(#b4)"><path d="M979.0 667.0 L1003.0 660.0 L1020.0 657.0 L1027.5 672.0 L1051.8 681.6 L1076.0 696.0 L1086.0 715.6 L1088.0 745.0 L1051.8 752.1 L1015.4 749.7 L1003.2 735.1 L979.0 725.0Z" fill="#182a20" opacity="0.9"/></g>
<g filter="url(#coast)">
<path d="M944.8 676.7 L930.2 688.9 L930.2 705.9 L942.4 718.1 L954.6 727.8 L971.6 730.2 L979.0 722.0 L976.0 705.0 L979.0 690.0 L966.7 680.0Z" fill="#3a4b2b" />
<path d="M1072.0 843.3 L1088.5 836.3 L1100.2 826.9 L1114.3 838.6 L1123.6 848.0 L1116.6 857.4 L1102.5 864.4 L1093.2 866.8 L1088.5 852.7 L1079.1 848.0Z" fill="#2f4727" />
<path d="M1055.6 904.3 L1060.3 887.9 L1093.2 873.8 L1123.6 873.8 L1137.7 869.1 L1142.4 880.8 L1128.3 894.9 L1109.6 911.3 L1093.2 918.4 L1079.1 925.4 L1072.0 944.2 L1066.2 947.7 L1067.4 932.4 L1074.4 920.7 L1062.7 916.0Z" fill="#324b2a" />
<path d="M919.2 940.2 L907.6 942.6 L889.0 949.5 L879.7 965.8 L863.5 979.7 L854.2 993.7 L853.0 1016.0 L853.0 1046.0 L885.0 1046.0 L885.5 1016.0 L889.0 1007.6 L897.1 998.3 L891.3 989.0 L893.7 977.4 L900.6 963.5 L909.9 956.5Z" fill="#3a4f29" />
<path d="M791.5 1046.0 L791.5 1016.0 L793.8 1006.4 L798.4 1004.1 L799.6 1009.9 L797.3 1016.0 L797.3 1046.0Z" fill="#3a4f29" />
<path d="M1206.0 124.0 L1216.0 121.0 L1228.0 126.0 L1230.0 136.0 L1222.0 142.0 L1211.0 140.0 L1206.0 132.0Z" fill="#3c502b" />
<path d="M318.0 284.0 L332.0 280.0 L346.0 287.0 L340.0 296.0 L324.0 300.0 L316.0 294.0Z" fill="#4a4a2f" />
<path d="M299.0 330.0 L308.0 330.0 L311.0 340.0 L304.0 346.0 L299.0 345.0Z" fill="#4e4a30" />
<path d="M322.0 312.0 L336.0 308.0 L350.0 312.0 L346.0 322.0 L330.0 326.0 L320.0 322.0Z" fill="#3f472c" />
<path d="M456.0 136.0 L470.0 131.0 L480.0 138.0 L476.0 148.0 L462.0 152.0 L452.0 146.0Z" fill="#3c482b" />
<path d="M492.0 121.0 L499.0 119.0 L502.0 125.0 L496.0 128.0Z" fill="#3c482b" />
<path d="M345.0 262.0 L352.0 258.0 L355.0 266.0 L349.0 270.0Z" fill="#2a3422" />
<ellipse cx="1085.5" cy="959.6" rx="1.6" ry="1.6" fill="#3a4f29" />
</g>
<clipPath id="isl"><path d="M944.8 676.7 L930.2 688.9 L930.2 705.9 L942.4 718.1 L954.6 727.8 L971.6 730.2 L979.0 722.0 L976.0 705.0 L979.0 690.0 L966.7 680.0Z" fill="#000" /><path d="M1072.0 843.3 L1088.5 836.3 L1100.2 826.9 L1114.3 838.6 L1123.6 848.0 L1116.6 857.4 L1102.5 864.4 L1093.2 866.8 L1088.5 852.7 L1079.1 848.0Z" fill="#000" /><path d="M1055.6 904.3 L1060.3 887.9 L1093.2 873.8 L1123.6 873.8 L1137.7 869.1 L1142.4 880.8 L1128.3 894.9 L1109.6 911.3 L1093.2 918.4 L1079.1 925.4 L1072.0 944.2 L1066.2 947.7 L1067.4 932.4 L1074.4 920.7 L1062.7 916.0Z" fill="#000" /><path d="M919.2 940.2 L907.6 942.6 L889.0 949.5 L879.7 965.8 L863.5 979.7 L854.2 993.7 L853.0 1016.0 L853.0 1046.0 L885.0 1046.0 L885.5 1016.0 L889.0 1007.6 L897.1 998.3 L891.3 989.0 L893.7 977.4 L900.6 963.5 L909.9 956.5Z" fill="#000" /></clipPath>
<g clip-path="url(#isl)"><rect x="299" y="86" width="1428" height="930" filter="url(#gr)" opacity="0.35"/><rect x="299" y="86" width="1428" height="930" filter="url(#gr2)" opacity="0.3"/><rect x="299" y="86" width="1428" height="930" filter="url(#lakes2)" fill="#142216" opacity="0.5"/></g>
<g filter="url(#arch)" opacity="0.8">
<path d="M979.0 667.0 L1003.0 660.0 L1020.0 657.0 L1027.5 672.0 L1051.8 681.6 L1076.0 696.0 L1086.0 715.6 L1088.0 745.0 L1051.8 752.1 L1015.4 749.7 L1003.2 735.1 L979.0 725.0Z" fill="#31472a" />
<ellipse cx="900" cy="790" rx="22" ry="40" fill="#2c4126" transform="rotate(40 900 790)" />
</g>
<circle cx="1036" cy="93" r="4.9" fill="#fff"/><circle cx="1036" cy="93" r="3.2" fill="#3bb2d0"/>
<circle cx="968" cy="281" r="4.9" fill="#fff"/><circle cx="968" cy="281" r="3.2" fill="#3bb2d0"/>
<circle cx="808" cy="456" r="4.9" fill="#fff"/><circle cx="808" cy="456" r="3.2" fill="#3bb2d0"/>
<circle cx="687" cy="652" r="4.9" fill="#fff"/><circle cx="687" cy="652" r="3.2" fill="#3bb2d0"/>
<circle cx="706" cy="675" r="4.9" fill="#fff"/><circle cx="706" cy="675" r="3.2" fill="#3bb2d0"/>
<circle cx="450" cy="737" r="4.9" fill="#fff"/><circle cx="450" cy="737" r="3.2" fill="#3bb2d0"/>
<circle cx="601.5" cy="795.4" r="4.9" fill="#fff"/><circle cx="601.5" cy="795.4" r="3.2" fill="#3bb2d0"/>
<circle cx="632.1" cy="802.3" r="4.9" fill="#fff"/><circle cx="632.1" cy="802.3" r="3.2" fill="#3bb2d0"/>
<circle cx="764.3" cy="795.6" r="4.9" fill="#fff"/><circle cx="764.3" cy="795.6" r="3.2" fill="#3bb2d0"/>
<circle cx="848.4" cy="802.5" r="4.9" fill="#fff"/><circle cx="848.4" cy="802.5" r="3.2" fill="#3bb2d0"/>
<circle cx="825.8" cy="814.4" r="4.9" fill="#fff"/><circle cx="825.8" cy="814.4" r="3.2" fill="#3bb2d0"/>
<circle cx="557.3" cy="829.4" r="4.9" fill="#fff"/><circle cx="557.3" cy="829.4" r="3.2" fill="#3bb2d0"/>
<circle cx="688.1" cy="827.9" r="4.9" fill="#fff"/><circle cx="688.1" cy="827.9" r="3.2" fill="#3bb2d0"/>
<circle cx="746.2" cy="878.2" r="4.9" fill="#fff"/><circle cx="746.2" cy="878.2" r="3.2" fill="#3bb2d0"/>
<circle cx="602.8" cy="922.2" r="4.9" fill="#fff"/><circle cx="602.8" cy="922.2" r="3.2" fill="#3bb2d0"/>
<circle cx="637" cy="962.8" r="4.9" fill="#fff"/><circle cx="637" cy="962.8" r="3.2" fill="#3bb2d0"/>
<circle cx="665.8" cy="975" r="4.9" fill="#fff"/><circle cx="665.8" cy="975" r="3.2" fill="#3bb2d0"/>
<circle cx="635.8" cy="990.9" r="4.9" fill="#fff"/><circle cx="635.8" cy="990.9" r="3.2" fill="#3bb2d0"/>
<circle cx="800" cy="654" r="7" fill="#fff"/><circle cx="800" cy="654" r="5" fill="#fbb03b"/>
</g></svg>
<!--/MAPSVG-->
</div>
<!-- RIGHT CONTROL -->
<div id="ctl">
  <div class="btn" style="left:12px;background:#e6ebef;color:#aab8c4">Save</div>
  <div class="btn" style="left:75px;background:#4264fb;color:#fff">Export</div>
  <div class="abs" style="left:12px;top:48px;width:120px;height:24px;border:1px solid #bccbd7;border-radius:4px"></div>
  <svg class="abs" style="left:17px;top:53px" width="14" height="14" viewBox="0 0 14 14"><circle cx="5.6" cy="5.6" r="4" fill="none" stroke="#b4c4d0" stroke-width="1.7"/><path d="M8.6 8.600l4 4" stroke="#b4c4d0" stroke-width="1.900"/></svg>
  <div class="abs" style="left:36px;top:53px;font-size:12px;color:#b0bfcb;white-space:nowrap">Search places</div>
  <!-- search dataset icon -->
  <svg class="abs" style="left:13px;top:85px" width="16" height="16" viewBox="0 0 16 16"><path d="M5.500 3.200l2.800 2.800-2.800 2.800-2.800-2.800z" fill="none" stroke="#0f1c24" stroke-width="1.500"/><circle cx="5.500" cy="2.800" r="1.200" fill="#0f1c24"/><circle cx="2.300" cy="6" r="1.200" fill="#0f1c24"/><circle cx="8.700" cy="6" r="1.200" fill="#0f1c24"/><circle cx="5.500" cy="9.200" r="1.200" fill="#0f1c24"/><circle cx="12.200" cy="2.600" r="1.900" fill="#0f1c24"/><path d="M13.200 8.800l-3.700 3.700" stroke="#0f1c24" stroke-width="1.300"/><circle cx="13.200" cy="8.600" r="1.500" fill="#0f1c24"/><circle cx="9.400" cy="12.800" r="1.500" fill="#0f1c24"/></svg>
  <!-- background style (paint bucket) -->
  <svg class="abs" style="left:13px;top:109px" width="16" height="16" viewBox="0 0 16 16"><path d="M4.600 1.200l6.600 6.600-4.600 4.600a1.400 1.400 0 0 1-2 0L1.400 9.200a1.400 1.400 0 0 1 0-2l4-4-1.700-1.700z" fill="#0f1c24"/><path d="M3.200 7.200l3-3 3.200 3z" fill="#fff"/><path d="M13 10.200c.9 1.300 1.700 2.200 1.700 3.100a1.700 1.700 0 0 1-3.400 0c0-.9.800-1.800 1.700-3.100z" fill="#0f1c24"/></svg>
  <!-- reference tileset -->
  <svg class="abs" style="left:13px;top:133px" width="16" height="16" viewBox="0 0 16 16"><path d="M8 3.200l2.600 1.700L8 6.600 5.400 4.900zM3.800 6.200l2.600 1.700-2.600 1.700L1.200 7.900zM12.200 6.200l2.600 1.700-2.600 1.700-2.600-1.700zM8 9.200l2.600 1.700L8 12.600l-2.600-1.700z" fill="#0f1c24" stroke="#0f1c24" stroke-width=".8" stroke-linejoin="round"/></svg>
  <!-- history -->
  <svg class="abs" style="left:13px;top:157px" width="16" height="16" viewBox="0 0 16 16"><path d="M1.200 4.500h7M1.200 8.200h5.500M1.200 11.900h5.500" stroke="#0f1c24" stroke-width="1.600"/><path d="M8.500 4.700h3a3.600 3.600 0 0 1 0 7.200H9.500" fill="none" stroke="#0f1c24" stroke-width="1.600"/><path d="M11 1.300L7.800 4.700 11 8z" fill="#0f1c24"/></svg>
  <!-- help -->
  <svg class="abs" style="left:13px;top:181px" width="16" height="16" viewBox="0 0 16 16"><circle cx="8" cy="8" r="7.200" fill="#0f1c24"/><path d="M5.700 6.300a2.400 2.400 0 1 1 3.600 2c-.8.500-1.200.9-1.200 1.700" fill="none" stroke="#fff" stroke-width="1.700"/><circle cx="8.100" cy="12.100" r="1.050" fill="#fff"/></svg>
  <div class="item" style="top:87px">Search dataset</div>
  <div class="item" style="top:111px">Background style</div>
  <div class="item" style="top:135px">Reference tileset</div>
  <div class="item" style="top:159px">History</div>
  <div class="item" style="top:183px">Help</div>
  <div class="abs" style="left:0;top:207px;width:144px;height:1px;background:#c4d0da"></div>
  <div class="abs" style="left:12px;top:221px;font-family:'Liberation Mono',monospace;font-size:10px;font-weight:bold;color:#0f1c24">5.26</div>
  <div class="abs" style="left:53px;top:221px;font-family:'Liberation Mono',monospace;font-size:10px;color:#0f1c24;letter-spacing:0px">61.571,21.054</div>
</div>
<div id="zoomctl"><i style="left:35px"></i><i style="left:71px"></i><i style="left:107px"></i>
  <svg class="abs" style="left:11px;top:5px" width="14" height="14" viewBox="0 0 14 14"><path d="M7 1v12M1 7h12" stroke="#2b4a62" stroke-width="1.900"/></svg>
  <svg class="abs" style="left:47px;top:5px" width="14" height="14" viewBox="0 0 14 14"><path d="M1 7h12" stroke="#2b4a62" stroke-width="1.900"/></svg>
  <svg class="abs" style="left:83px;top:5px" width="14" height="14" viewBox="0 0 14 14"><path d="M3.400 1h7.200l2 12H1.400z" fill="#2b4a62"/><path d="M7 2.800v3M7 8.200v3.400" stroke="#d5dad6" stroke-width="1.700"/></svg>
  <svg class="abs" style="left:119px;top:4px" width="14" height="15" viewBox="0 0 14 15"><path d="M7 .8l5.400 13L7 10.200 1.600 13.800z" fill="#2b4a62"/></svg>
</div>
</div>
</body>
</html>
